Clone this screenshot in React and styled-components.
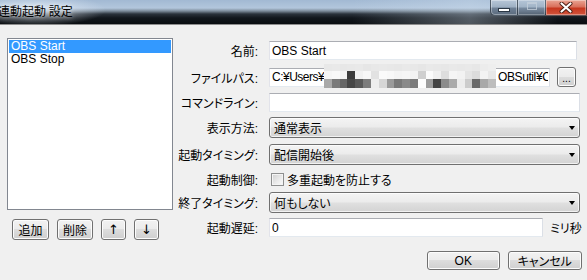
import React from 'react';
import styled, { createGlobalStyle } from 'styled-components';

const GlobalStyle = createGlobalStyle`
	html, body {
		margin: 0;
		padding: 0;
	}
	body {
		background: #f0f0f0;
		color: #000;
		font-family: "Liberation Sans", "Noto Sans CJK JP", sans-serif;
		font-size: 12px;
	}
`;

const mosaicRows = [
	['#e8e8e8', '#e9e9e9', '#e7e7e7', '#e8e8e8', '#e9e9e9', '#e6e6e6', '#e8e8e8', '#e9e9e9', '#e8e8e8', '#e7e7e7', '#e9e9e9', '#e8e8e8', '#e6e6e6', '#e9e9e9', '#e8e8e8', '#e7e7e7', '#e9e9e9', '#e8e8e8', '#e9e9e9', '#e7e7e7', '#ececec', '#eeeeee'],
	['#f6f6f6', '#f9f9f9', '#f3f3f3', '#3b3b3b', '#f1f1f1', '#f7f7f7', '#e2e2e2', '#fafafa', '#f8f8f8', '#f4f4f4', '#f6f6f6', '#f2f2f2', '#cfcfcf', '#fbfbfb', '#f0f0f0', '#dedede', '#f5f5f5', '#f2f2f2', '#e4e4e4', '#dcdcdc', '#f3f3f3', '#e8e8e8'],
	['#a9a9a9', '#7a7a7a', '#666666', '#474747', '#5a5a5a', '#7d7d7d', '#eeeeee', '#d6d6d6', '#9b9b9b', '#7a7a7a', '#8a8a8a', '#7b7b7b', '#fdfdfd', '#9d9d9d', '#444444', '#8b8b8b', '#aaaaaa', '#ececec', '#cccccc', '#6a6a6a', '#a8a8a8', '#bdbdbd'],
];

const App = () => {
	return (
		<>
			<GlobalStyle />
			<Window>
				<TitleBar>
					<Title>連動起動 設定</Title>
					<Caption>
						<CaptionButton $w={28} $kind='min'>
							<MinGlyph />
						</CaptionButton>
						<CaptionButton $w={28} $kind='max'>
							<MaxGlyph />
						</CaptionButton>
						<CaptionButton $w={41} $kind='close'>
							<svg width='14' height='11' viewBox='0 0 14 11'>
								<path d='M2.5 1.5 L11.5 9.5 M11.5 1.5 L2.5 9.5' stroke='#4a1c12' strokeWidth='4' strokeLinecap='round' fill='none' />
								<path d='M2.5 1.5 L11.5 9.5 M11.5 1.5 L2.5 9.5' stroke='#ffffff' strokeWidth='2.2' strokeLinecap='round' fill='none' />
							</svg>
						</CaptionButton>
					</Caption>
				</TitleBar>

				<Body>
					<LeftPane>
						<ListBox>
							<ListItem $selected>OBS Start</ListItem>
							<ListItem>OBS Stop</ListItem>
						</ListBox>
						<ListButtons>
							<PushButton $w={37} $h={21}>追加</PushButton>
							<PushButton $w={36} $h={21}>削除</PushButton>
							<ArrowButton $w={25} $h={21}>↑</ArrowButton>
							<ArrowButton $w={25} $h={21}>↓</ArrowButton>
						</ListButtons>
					</LeftPane>

					<Form>
						<FormRow $mt={0} $h={19}>
							<Label>名前:</Label>
							<TextField $w={308}>OBS Start</TextField>
						</FormRow>
						<FormRow $mt={7} $h={20}>
							<Label>ファイルパス:</Label>
							<TextField $w={281}>
								<PathHead>C:¥Users¥</PathHead>
								<Mosaic>
									{mosaicRows.map((row, i) => (
										<MosaicRow key={i} $h={[7, 8, 9][i]}>
											{row.map((c, j) => (
												<MosaicCell key={j} $c={c} />
											))}
										</MosaicRow>
									))}
								</Mosaic>
								<PathTail>OBSutil¥C</PathTail>
							</TextField>
							<BrowseButton>...</BrowseButton>
						</FormRow>
						<FormRow $mt={6} $h={19}>
							<Label>コマンドライン:</Label>
							<TextField $w={311} />
						</FormRow>
						<FormRow $mt={5} $h={21}>
							<Label>表示方法:</Label>
							<ComboBox>
								通常表示
								<Arrow />
							</ComboBox>
						</FormRow>
						<FormRow $mt={6} $h={21}>
							<Label>起動タイミング:</Label>
							<ComboBox>
								配信開始後
								<Arrow />
							</ComboBox>
						</FormRow>
						<FormRow $mt={8} $h={13}>
							<Label>起動制御:</Label>
							<CheckBox />
							<CheckText>多重起動を防止する</CheckText>
						</FormRow>
						<FormRow $mt={6} $h={21}>
							<Label>終了タイミング:</Label>
							<ComboBox>
								何もしない
								<Arrow />
							</ComboBox>
						</FormRow>
						<FormRow $mt={5} $h={19}>
							<Label>起動遅延:</Label>
							<TextField $w={274}>0</TextField>
							<Unit>ミリ秒</Unit>
						</FormRow>
						<DialogButtons>
							<PushButton $w={73} $h={19}>OK</PushButton>
							<PushButton $w={74} $h={19}>キャンセル</PushButton>
						</DialogButtons>
					</Form>
				</Body>
			</Window>
		</>
	);
};

const Window = styled.div`
	width: 587px;
	height: 280px;
	overflow: hidden;
	background: #f0f0f0;
	display: flex;
	flex-direction: column;
	font-feature-settings: 'palt';
`;

const TitleBar = styled.div`
	height: 24px;
	flex-shrink: 0;
	border-bottom: 1px solid #8e8e8e;
	display: flex;
	justify-content: space-between;
	align-items: flex-start;
	background:
		radial-gradient(ellipse 70px 16px at 36px 10px, rgba(235, 242, 250, 0.75), rgba(235, 242, 250, 0) 100%),
		linear-gradient(to right, rgba(255, 255, 255, 0) 60%, rgba(210, 225, 240, 0.35) 80%, rgba(255, 255, 255, 0) 95%),
		linear-gradient(to bottom, #a2b9d3 0px, #b2c6dc 8px, #7d8c9b 11px, #2a323b 14px, #11161c 18px, #0a0d11 24px);
`;

const Title = styled.div`
	margin: 4px 0 0 -2px;
	font-family: "Noto Sans CJK JP", sans-serif;
	font-size: 12px;
	line-height: 14px;
	color: #000;
	white-space: nowrap;
	text-shadow: 0 0 4px rgba(255, 255, 255, 0.8);
`;

const Caption = styled.div`
	display: flex;
`;

const CaptionButton = styled.div`
	width: ${(p) => p.$w}px;
	height: 16px;
	box-sizing: border-box;
	display: flex;
	align-items: center;
	justify-content: center;
	border: 1px solid rgba(40, 50, 60, 0.7);
	border-top: none;
	border-left: ${(p) => (p.$kind === 'min' ? '1px solid rgba(40,50,60,0.7)' : 'none')};
	border-radius: ${(p) => (p.$kind === 'min' ? '0 0 0 5px' : '0')};
	box-shadow: inset 0 0 0 1px rgba(255, 255, 255, 0.35);
	background: ${(p) =>
		p.$kind === 'close'
			? 'linear-gradient(to bottom, #e9a594 0%, #d9705c 45%, #c6371f 55%, #d2543c 100%)'
			: 'linear-gradient(to bottom, #b7c7d8 0%, #9fb1c4 45%, #6e8095 55%, #5b6b7d 100%)'};
	opacity: ${(p) => (p.$kind === 'max' ? 0.85 : 1)};
`;

const MinGlyph = styled.div`
	width: 10px;
	height: 2px;
	margin-top: 4px;
	background: #fff;
	border: 1px solid #2b3846;
`;

const MaxGlyph = styled.div`
	width: 8px;
	height: 6px;
	margin-top: -3px;
	border: 1px solid #c8d2dc;
	box-shadow: inset 0 1px 0 #c8d2dc;
	opacity: 0.8;
`;

const Body = styled.div`
	display: flex;
	flex: 1;
`;

const LeftPane = styled.div`
	display: flex;
	flex-direction: column;
	padding: 13px 0 0 7px;
	width: 166px;
	flex-shrink: 0;
`;

const ListBox = styled.div`
	width: 166px;
	height: 172px;
	box-sizing: border-box;
	border: 1px solid #828790;
	background: #fff;
	padding: 1px;
`;

const ListItem = styled.div`
	height: 13px;
	line-height: 13px;
	padding-left: 2px;
	white-space: nowrap;
	background: ${(p) => (p.$selected ? '#3399ff' : 'transparent')};
	color: ${(p) => (p.$selected ? '#fff' : '#000')};
`;

const ListButtons = styled.div`
	display: flex;
	gap: 8px;
	margin: 9px 0 0 5px;
`;

const PushButton = styled.div`
	width: ${(p) => p.$w}px;
	height: ${(p) => p.$h}px;
	box-sizing: border-box;
	display: flex;
	align-items: center;
	justify-content: center;
	border: 1px solid #707070;
	border-radius: 3px;
	background: linear-gradient(to bottom, #f2f2f2 0%, #ebebeb 50%, #dddddd 50%, #cfcfcf 100%);
	box-shadow: inset 0 0 0 1px #fcfcfc;
	white-space: nowrap;
	font-size: 12px;
`;

const ArrowButton = styled(PushButton)`
	font-family: "DejaVu Sans", sans-serif;
	font-size: 13px;
	color: #000;
`;

const Form = styled.div`
	display: flex;
	flex-direction: column;
	padding-top: 16px;
`;

const FormRow = styled.div`
	display: flex;
	align-items: center;
	height: ${(p) => p.$h}px;
	margin-top: ${(p) => p.$mt}px;
`;

const Label = styled.div`
	width: 85px;
	margin-right: 11px;
	text-align: right;
	white-space: nowrap;
	direction: rtl;
	unicode-bidi: plaintext;
	flex-shrink: 0;
`;

const TextField = styled.div`
	width: ${(p) => p.$w}px;
	height: 19px;
	box-sizing: border-box;
	display: flex;
	align-items: center;
	padding: 0 1px 0 2px;
	border: 1px solid;
	border-color: #abadb3 #dbdfe6 #e3e9ef #e2e3ea;
	background: #fff;
	white-space: nowrap;
	flex-shrink: 0;
`;

const PathHead = styled.span`
	width: 52px;
	flex-shrink: 0;
	overflow: hidden;
	letter-spacing: -0.5px;
`;

const Mosaic = styled.div`
	width: 172px;
	height: 24px;
	flex-shrink: 0;
	display: flex;
	flex-direction: column;
	margin-top: -2px;
`;

const MosaicRow = styled.div`
	height: ${(p) => p.$h}px;
	display: flex;
`;

const MosaicCell = styled.div`
	flex: 1;
	background: ${(p) => p.$c};
`;

const PathTail = styled.span`
	flex: 1;
	min-width: 0;
	overflow: hidden;
	margin-left: 2px;
	letter-spacing: -0.4px;
`;

const BrowseButton = styled(PushButton)`
	width: 19px;
	height: 20px;
	margin-left: 7px;
	align-items: flex-end;
	padding-bottom: 3px;
	font-size: 10px;
	line-height: 8px;
`;

const ComboBox = styled.div`
	width: 311px;
	height: 21px;
	box-sizing: border-box;
	display: flex;
	align-items: center;
	padding-left: 4px;
	border: 1px solid #707070;
	border-radius: 3px;
	background: linear-gradient(to bottom, #f4f4f4 0%, #ececec 45%, #dfdfdf 55%, #d3d3d3 100%);
	box-shadow: inset 0 0 0 1px rgba(255, 255, 255, 0.7);
`;

const Arrow = styled.span`
	margin-left: auto;
	margin-right: 4px;
	width: 0;
	height: 0;
	border-left: 3.5px solid transparent;
	border-right: 3.5px solid transparent;
	border-top: 4px solid #000;
`;

const CheckBox = styled.div`
	width: 13px;
	height: 13px;
	margin-left: 2px;
	box-sizing: border-box;
	border: 1px solid #8e8f8f;
	background: linear-gradient(135deg, #cfcfcf 0%, #ececec 60%, #fbfbfb 100%);
	box-shadow: inset 0 0 0 1px #f4f4f4;
`;

const CheckText = styled.span`
	margin-left: 3px;
	white-space: nowrap;
`;

const Unit = styled.span`
	margin-left: 7px;
	white-space: nowrap;
`;

const DialogButtons = styled.div`
	display: flex;
	justify-content: flex-end;
	gap: 8px;
	margin-top: 14px;
`;

export default App;
